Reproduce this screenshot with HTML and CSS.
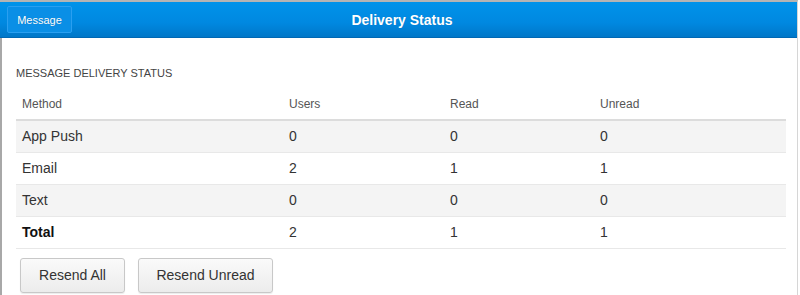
FILE: index.html
```html
<!DOCTYPE html>
<html lang="en">
<head>
    <meta charset="UTF-8">
    <meta name="viewport" content="width=device-width, initial-scale=1.0">
    <title>Delivery Status</title>
    <link rel="stylesheet" href="styles.css">
</head>
<body>
    <div class="window">
        <!-- Title bar -->
        <header class="titlebar">
            <div class="titlebar-left">
                <button class="back-btn" type="button">Message</button>
            </div>
            <h1 class="title">Delivery Status</h1>
            <div></div>
        </header>

        <main class="content">
            <div class="caption">MESSAGE DELIVERY STATUS</div>

            <table class="status-table">
                <thead>
                    <tr>
                        <th class="col-method">Method</th>
                        <th class="col-users">Users</th>
                        <th class="col-read">Read</th>
                        <th>Unread</th>
                    </tr>
                </thead>
                <tbody>
                    <tr><td>App Push</td><td>0</td><td>0</td><td>0</td></tr>
                    <tr><td>Email</td><td>2</td><td>1</td><td>1</td></tr>
                    <tr><td>Text</td><td>0</td><td>0</td><td>0</td></tr>
                    <tr class="total"><td>Total</td><td>2</td><td>1</td><td>1</td></tr>
                </tbody>
            </table>

            <div class="actions">
                <button class="btn btn-all" type="button">Resend All</button>
                <button class="btn btn-unread" type="button">Resend Unread</button>
            </div>
        </main>
    </div>
</body>
</html>
```

FILE: styles.css
```css
/* Global Styles */
* { margin: 0; padding: 0; box-sizing: border-box; }
body {
    font-family: "Liberation Sans", Arial, sans-serif;
    color: #333;
    background: #fff;
    width: 800px;
    height: 295px;
    overflow: hidden;
}
.window {
    width: 798px;
    border-top: 2px solid #b4b4b4;
    border-right: 1px solid #d6d6d6;
    height: 295px;
}

/* Title bar */
.titlebar {
    height: 36px;
    display: grid;
    grid-template-columns: 1fr auto 1fr;
    align-items: center;
    background: linear-gradient(to bottom, #0093ea 0%, #0088e0 60%, #0077c8 100%);
    border-bottom: 1px solid #0068b4;
    padding-left: 7px;
}
.back-btn {
    font-family: "Liberation Sans", Arial, sans-serif;
    font-size: 11px;
    color: #fff;
    background: #0a8fe6;
    border: 1px solid #2a9ff0;
    border-radius: 2px;
    width: 65px;
    height: 27px;
    text-shadow: 0 0 1px rgba(0, 0, 0, 0.2);
}
.title {
    font-size: 14px;
    font-weight: bold;
    color: #fff;
    text-shadow: 0 0 1px rgba(0, 0, 0, 0.15);
}

/* Content */
.content {
    border-left: 2px solid #a8a8a8;
    padding: 29px 0 0 14px;
    height: 257px;
}
.caption {
    font-size: 11px;
    color: #444;
    line-height: 13px;
    margin-bottom: 9px;
}
.status-table {
    width: 770px;
    border-collapse: collapse;
}
.status-table th {
    font-size: 12px;
    font-weight: normal;
    color: #555;
    text-align: left;
    height: 31px;
    padding: 0 6px;
    border-bottom: 2px solid #dcdcdc;
}
.col-method { width: 267px; }
.col-users { width: 161px; }
.col-read { width: 150px; }
.status-table td {
    font-size: 14px;
    color: #333;
    height: 32px;
    padding: 0 6px;
    border-bottom: 1px solid #e8e8e8;
}
.status-table tbody tr:nth-child(odd) td { background: #f4f4f4; }
.status-table tr.total td:first-child { font-weight: bold; color: #111; }

/* Buttons */
.actions {
    display: flex;
    gap: 13px;
    padding: 9px 0 0 4px;
}
.btn {
    font-family: "Liberation Sans", Arial, sans-serif;
    font-size: 14px;
    color: #333;
    height: 35px;
    border: 1px solid #c8c8c8;
    border-radius: 3px;
    background: linear-gradient(to bottom, #fafafa, #ececec);
    box-shadow: 0 1px 1px rgba(0, 0, 0, 0.08);
}
.btn-all { width: 105px; }
.btn-unread { width: 135px; }
```
